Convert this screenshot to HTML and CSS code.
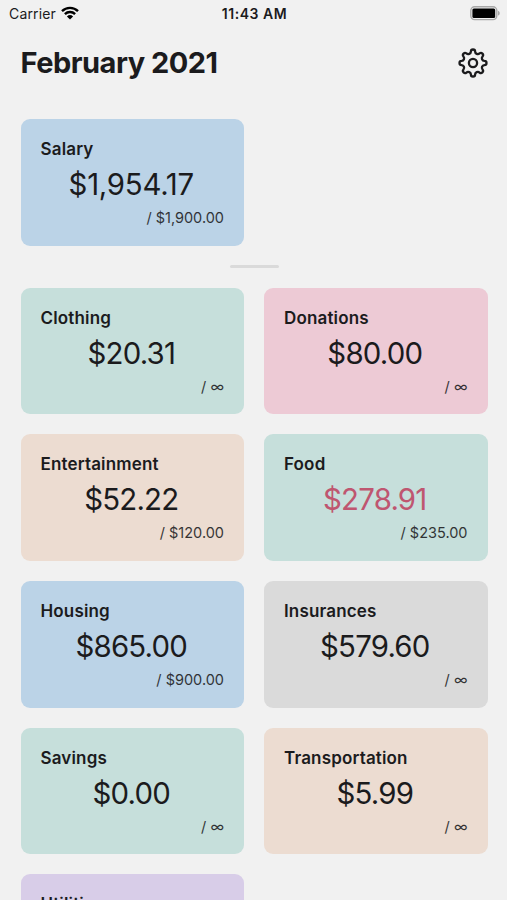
FILE: index.html
```html
<!DOCTYPE html>
<html lang="en">
<head>
  <meta charset="UTF-8" />
  <meta name="viewport" content="width=device-width, initial-scale=1.0" />
  <title>Budget - February 2021</title>
  <link rel="stylesheet" href="styles.css">
</head>
<body>
  <div class="status-bar">
    <div class="carrier">
      <span>Carrier</span>
      <svg class="wifi" viewBox="0 0 18 14">
        <path d="M1 5.2a11.4 11.4 0 0 1 16 0M3.9 8.1a7.3 7.3 0 0 1 10.2 0" />
        <path class="wifi-dot" d="M5.9 10.4a4.5 4.5 0 0 1 6.2 0L9 13.6z" />
      </svg>
    </div>
    <div class="time">11:43 AM</div>
    <svg class="battery" viewBox="0 0 30 15">
      <rect class="battery-shell" x=".8" y=".8" width="26" height="12.8" rx="3.8" />
      <rect x="2.4" y="2.5" width="22.8" height="9.4" rx="1.5" />
      <path class="battery-cap" d="M28 4.8c2.3.9 2.3 3.9 0 4.8z" />
    </svg>
  </div>

  <header>
    <h1>February 2021</h1>
    <svg class="settings" viewBox="-15 -15 30 30">
      <path d="M-2.1-11.4A2.1 2.1 0 0 1 2.1-11.4A2.7 2.7 0 0 0 6.58-9.54A2.1 2.1 0 0 1 9.54-6.58A2.7 2.7 0 0 0 11.4-2.1A2.1 2.1 0 0 1 11.4 2.1A2.7 2.7 0 0 0 9.54 6.58A2.1 2.1 0 0 1 6.58 9.54A2.7 2.7 0 0 0 2.1 11.4A2.1 2.1 0 0 1-2.1 11.4A2.7 2.7 0 0 0-6.58 9.54A2.1 2.1 0 0 1-9.54 6.58A2.7 2.7 0 0 0-11.4 2.1A2.1 2.1 0 0 1-11.4-2.1A2.7 2.7 0 0 0-9.54-6.58A2.1 2.1 0 0 1-6.58-9.54A2.7 2.7 0 0 0-2.1-11.4Z" />
      <circle r="4.1" />
    </svg>
  </header>

  <main>
    <div class="grid income">
      <div class="card blue">
        <h2>Salary</h2>
        <p class="amount">$1,954.17</p>
        <p class="limit">/ $1,900.00</p>
      </div>
    </div>

    <div class="divider"></div>

    <div class="grid">
      <div class="card green">
        <h2>Clothing</h2>
        <p class="amount">$20.31</p>
        <p class="limit">/ ∞</p>
      </div>
      <div class="card pink">
        <h2>Donations</h2>
        <p class="amount">$80.00</p>
        <p class="limit">/ ∞</p>
      </div>
      <div class="card orange">
        <h2>Entertainment</h2>
        <p class="amount">$52.22</p>
        <p class="limit">/ $120.00</p>
      </div>
      <div class="card green">
        <h2>Food</h2>
        <p class="amount over">$278.91</p>
        <p class="limit">/ $235.00</p>
      </div>
      <div class="card blue">
        <h2>Housing</h2>
        <p class="amount">$865.00</p>
        <p class="limit">/ $900.00</p>
      </div>
      <div class="card gray">
        <h2>Insurances</h2>
        <p class="amount">$579.60</p>
        <p class="limit">/ ∞</p>
      </div>
      <div class="card green">
        <h2>Savings</h2>
        <p class="amount">$0.00</p>
        <p class="limit">/ ∞</p>
      </div>
      <div class="card orange">
        <h2>Transportation</h2>
        <p class="amount">$5.99</p>
        <p class="limit">/ ∞</p>
      </div>
      <div class="card purple">
        <h2>Utilities</h2>
      </div>
    </div>
  </main>
</body>
</html>
```
FILE: styles.css
```css
* {
  box-sizing: border-box;
}

body {
  font-family: 'Inter', sans-serif;
  background: #f1f1f1;
  color: #1b1b1d;
  margin: 0;
  height: 100vh;
  overflow: hidden;
}

h1, h2, p {
  margin: 0;
}

.status-bar {
  display: grid;
  grid-template-columns: 1fr auto 1fr;
  align-items: center;
  height: 27px;
  padding: 0 7px 0 9px;
  font-size: 14px;
}

.carrier {
  display: flex;
  align-items: center;
  gap: 5.5px;
  letter-spacing: 0.15px;
}

.wifi {
  width: 18px;
  height: 14px;
  margin-bottom: 2px;
  fill: none;
  stroke: #000;
  stroke-width: 2.4;
}

.wifi .wifi-dot {
  fill: #000;
  stroke: none;
}

.time {
  font-weight: 600;
  letter-spacing: 0.55px;
}

.battery {
  width: 30px;
  height: 15px;
  justify-self: end;
}

.battery-shell {
  fill: none;
  stroke: #a8a8a8;
  stroke-width: 1.4;
}

.battery-cap {
  fill: #a8a8a8;
}

header {
  display: flex;
  justify-content: space-between;
  align-items: center;
  height: 71px;
  padding: 0 19px 0 20.5px;
}

h1 {
  font-size: 29px;
  font-weight: 700;
  letter-spacing: -0.5px;
}

.settings {
  width: 30px;
  height: 30px;
  fill: none;
  stroke: #1b1b1d;
  stroke-width: 2.3;
}

main {
  padding: 21.4px 19.5px 0 20.5px;
}

.grid {
  display: grid;
  grid-template-columns: 1fr 1fr;
  grid-auto-rows: 126.6px;
  gap: 20px;
}

.card {
  border-radius: 9px;
  padding: 19px 20px;
}

.card h2 {
  font-size: 17px;
  font-weight: 600;
  line-height: 22px;
  letter-spacing: 0.16px;
}

.amount {
  font-size: 29.4px;
  line-height: 36px;
  letter-spacing: -0.8px;
  margin-top: 7px;
  padding-right: 2px;
  text-align: center;
}

.income .amount {
  letter-spacing: -0.25px;
}

.amount.over {
  color: #bf5670;
}

.limit {
  font-size: 14.5px;
  line-height: 20px;
  margin-top: 5px;
  text-align: right;
  opacity: 0.88;
}

.blue {
  background: #bbd3e7;
}

.green {
  background: #c6dfdb;
}

.pink {
  background: #edcad5;
}

.orange {
  background: #ecdcd1;
}

.gray {
  background: #dadada;
}

.purple {
  background: #d8cde8;
}

.divider {
  width: 49px;
  height: 3px;
  margin: 19px auto 19.8px;
  border-radius: 2px;
  background: #dadada;
}
```
